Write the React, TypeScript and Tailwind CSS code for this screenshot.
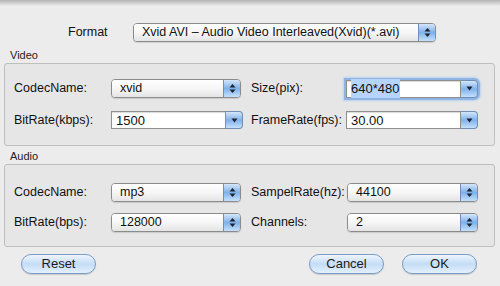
import type { ReactNode } from 'react'

const font = { fontFamily: '"Liberation Sans", Arial, sans-serif' }

const UpDown = () => (
  <svg width="7" height="11" viewBox="0 0 7 11" aria-hidden="true">
    <path d="M3.5 1 L6.5 4.5 H0.5 Z" fill="#1d2433" />
    <path d="M3.5 10 L6.5 6.5 H0.5 Z" fill="#1d2433" />
  </svg>
)

const Down = () => (
  <svg width="7" height="5" viewBox="0 0 7 5" aria-hidden="true">
    <path d="M0.5 0.5 H6.5 L3.5 4.5 Z" fill="#1d2433" />
  </svg>
)

const PopUp = ({ value, width }: { value: string; width: string }) => (
  <div
    className={`flex h-[19px] ${width} items-stretch overflow-hidden rounded-[4px] border border-[#8b8b8b] shadow-[0_1px_1px_rgba(0,0,0,0.12)]`}
  >
    <div className="flex flex-1 items-center whitespace-nowrap bg-gradient-to-b from-[#ffffff] via-[#f6f6f6] to-[#e4e4e4] pl-[8px] text-[12.5px] text-[#111]">
      {value}
    </div>
    <div className="flex w-[17px] items-center justify-center border-l border-[#6f8fb8] bg-gradient-to-b from-[#d4e6fa] via-[#7fb1ea] to-[#c4e0fb]">
      <UpDown />
    </div>
  </div>
)

const Combo = ({ value, focused }: { value: string; focused?: boolean }) => (
  <div
    className={`flex h-[18px] w-[132px] items-stretch rounded-r-[4px] ${
      focused ? 'shadow-[0_0_0_2px_#8fb4e3,0_0_2px_3px_#b9d2f0]' : ''
    }`}
  >
    <div className="flex flex-1 items-center border border-[#8f8f8f] bg-white pl-[4px] text-[13px] text-[#111] shadow-[inset_0_1px_1px_rgba(0,0,0,0.15)]">
      {focused ? <span className="bg-[#b5d5ff] pr-[1px]">{value}</span> : value}
    </div>
    <div className="flex w-[17px] items-center justify-center rounded-r-[4px] border border-l-0 border-[#6f8fb8] bg-gradient-to-b from-[#d4e6fa] via-[#7fb1ea] to-[#c4e0fb]">
      <Down />
    </div>
  </div>
)

const Row = ({ children }: { children: ReactNode }) => (
  <div className="flex items-center">{children}</div>
)

const Label = ({ text, width }: { text: string; width: string }) => (
  <div className={`${width} whitespace-nowrap text-[12.5px] text-[#111]`}>{text}</div>
)

const Group = ({ title, children, gap, pad }: { title: string; children: ReactNode; gap: string; pad: string }) => (
  <div>
    <div className="h-[17px] pl-[10px] pt-[1px] text-[11px] text-[#222]">{title}</div>
    <div className={`mx-[4px] flex h-[83px] w-[491px] flex-col ${gap} ${pad} rounded-[3px] border border-[#bfbfbf] bg-[#e6e6e6] pl-[9px]`}>
      {children}
    </div>
  </div>
)

const AquaButton = ({ label, width }: { label: string; width: string }) => (
  <button
    className={`flex h-[20px] ${width} items-center justify-center rounded-full border border-[#7c9cc4] bg-gradient-to-b from-[#eef5fd] via-[#c4ddf6] to-[#e3f0fc] text-[13px] text-[#1b1b1b] shadow-[0_1px_1px_rgba(0,0,0,0.15)]`}
  >
    {label}
  </button>
)

export default function App() {
  return (
    <div className="h-[286px] w-[500px] overflow-hidden bg-[#ececec]" style={font}>
      <div className="h-[6px] bg-gradient-to-b from-[#b4b4b4] to-[#ececec]" />

      <div className="flex items-center pt-[17px]">
        <div className="w-[133px] pl-[68px] text-[12.5px] text-[#111]">Format</div>
        <PopUp value="Xvid AVI – Audio Video Interleaved(Xvid)(*.avi)" width="w-[303px]" />
      </div>

      <div className="pt-[4px]">
        <Group title="Video" gap="gap-[13px]" pad="pt-[15px]">
          <Row>
            <Label text="CodecName:" width="w-[97px]" />
            <PopUp value="xvid" width="w-[130px]" />
            <div className="w-[10px]" />
            <Label text="Size(pix):" width="w-[95px]" />
            <Combo value="640*480" focused />
          </Row>
          <Row>
            <Label text="BitRate(kbps):" width="w-[97px]" />
            <div className="w-[130px]">
              <Combo value="1500" />
            </div>
            <div className="w-[10px]" />
            <Label text="FrameRate(fps):" width="w-[95px]" />
            <Combo value="30.00" />
          </Row>
        </Group>
      </div>

      <div className="pt-[1px]">
        <Group title="Audio" gap="gap-[11px]" pad="pt-[18px]">
          <Row>
            <Label text="CodecName:" width="w-[97px]" />
            <PopUp value="mp3" width="w-[130px]" />
            <div className="w-[10px]" />
            <Label text="SampelRate(hz):" width="w-[96px]" />
            <PopUp value="44100" width="w-[131px]" />
          </Row>
          <Row>
            <Label text="BitRate(bps):" width="w-[97px]" />
            <PopUp value="128000" width="w-[130px]" />
            <div className="w-[10px]" />
            <Label text="Channels:" width="w-[96px]" />
            <PopUp value="2" width="w-[131px]" />
          </Row>
        </Group>
      </div>

      <div className="flex items-center pt-[7px]">
        <div className="w-[21px]" />
        <AquaButton label="Reset" width="w-[75px]" />
        <div className="flex-1" />
        <AquaButton label="Cancel" width="w-[75px]" />
        <div className="w-[18px]" />
        <AquaButton label="OK" width="w-[75px]" />
        <div className="w-[23px]" />
      </div>
    </div>
  )
}
